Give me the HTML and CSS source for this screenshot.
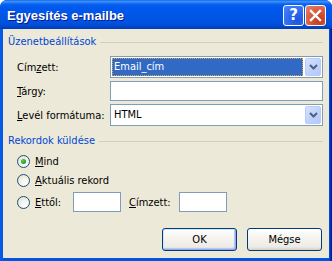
FILE: index.html
```html
<!DOCTYPE html>
<html lang="hu">
<head>
<meta charset="utf-8">
<title>Egyesítés e-mailbe</title>
<link rel="stylesheet" href="styles.css">
</head>
<body>
<div class="window">
  <div class="titlebar">
    <span class="title">Egyesítés e-mailbe</span>
    <div class="tbtns">
      <span class="tb help">?</span>
      <span class="tb close"><svg width="13" height="13" viewBox="0 0 13 13"><path d="M2 2 L11 11 M11 2 L2 11" stroke="#fff" stroke-width="2.4" stroke-linecap="square"/></svg></span>
    </div>
  </div>
  <div class="client">
    <div class="legend"><span>Üzenetbeállítások</span><i class="rule"></i></div>
    <div class="frow combo-row first">
      <span class="lbl">Cím<u>z</u>ett:</span>
      <div class="combo"><span class="sel">Email_cím</span><span class="drop"><svg width="9" height="6" viewBox="0 0 9 6"><path d="M1 1 L4.5 4.5 L8 1" stroke="#4D6185" stroke-width="2" fill="none"/></svg></span></div>
    </div>
    <div class="frow text-row">
      <span class="lbl"><u>T</u>árgy:</span>
      <div class="tbox"></div>
    </div>
    <div class="frow combo-row">
      <span class="lbl"><u>L</u>evél formátuma:</span>
      <div class="combo"><span class="val">HTML</span><span class="drop"><svg width="9" height="6" viewBox="0 0 9 6"><path d="M1 1 L4.5 4.5 L8 1" stroke="#4D6185" stroke-width="2" fill="none"/></svg></span></div>
    </div>
    <div class="legend g2"><span>Rekordok küldése</span><i class="rule"></i></div>
    <div class="radio r-mind"><span class="dot on"></span><span><u>M</u>ind</span></div>
    <div class="radio r-akt"><span class="dot"></span><span><u>A</u>ktuális rekord</span></div>
    <div class="radio r-ett">
      <span class="dot"></span><span class="ettl"><u>E</u>ttől:</span>
      <div class="tbox small"></div>
      <span class="cimz"><u>C</u>ímzett:</span>
      <div class="tbox small"></div>
    </div>
    <div class="buttons">
      <span class="btn def">OK</span>
      <span class="btn">Mégse</span>
    </div>
  </div>
</div>
</body>
</html>
```

FILE: styles.css
```css
* { box-sizing: border-box; }
html, body { margin: 0; padding: 0; }
body {
  width: 332px; height: 261px; overflow: hidden;
  font-family: "DejaVu Sans Condensed", "DejaVu Sans", sans-serif;
  font-size: 11px; color: #000;
}
.window {
  width: 332px; height: 261px;
  display: flex; flex-direction: column;
  background: linear-gradient(to right, #0055EA 0, #0A5FE8 1px, #0055E5 3px, #0055E5 329px, #0040C8 330px, #00138C 332px);
  border-radius: 7px 7px 0 0;
}
.titlebar {
  height: 29px; flex: none;
  display: flex; align-items: center;
  padding: 0 6px 0 7px;
  border-radius: 7px 7px 0 0;
  background: linear-gradient(to bottom, #0058EE 0, #3B93FF 1px, #3B8CF8 2px, #0A63EE 4px, #0058EE 7px, #0055E5 18px, #0050DC 24px, #0046C8 27px, #003DB8 29px);
}
.title {
  flex: 1;
  color: #fff; font-weight: bold; font-size: 13px;
  font-family: "Liberation Sans", Arial, sans-serif;
  text-shadow: 1px 1px 0 #0A1883;
  padding-top: 1px;
}
.tbtns { display: flex; gap: 1px; margin-top: 1px; }
.tb {
  width: 21px; height: 21px;
  border: 1px solid #fff; border-radius: 3px;
  display: flex; align-items: center; justify-content: center;
}
.help {
  background: radial-gradient(circle at 70% 75%, #1F55E0 0, #2A66F0 40%, #4C86FB 100%);
  color: #fff; font-weight: bold; font-size: 15px;
  font-family: "DejaVu Sans", sans-serif;
}
.close {
  background: radial-gradient(circle at 70% 75%, #C3391E 0, #D65236 40%, #E8846A 100%);
}
.client {
  flex: 1;
  margin: 0 3px 3px 3px;
  background: #ECE9D8;
  padding: 6px 6px 0 5px;
  display: flex; flex-direction: column;
}
.legend {
  height: 13px; line-height: 13px;
  display: flex; align-items: center;
  color: #0046D5;
}
.rule { flex: 1; height: 1px; background: #D0D0BF; margin-left: 4px; margin-top: 1px; }
.g2 { margin-top: 8px; }
.frow { display: flex; align-items: center; margin-left: 9px; }
.lbl { width: 93px; flex: none; }
.first { margin-top: 8px; }
.combo-row { height: 22px; }
.text-row { height: 20px; margin-top: 3px; }
.combo-row:not(.first) { margin-top: 3px; }
.combo {
  flex: 1; height: 22px;
  border: 1px solid #7F9DB9; background: #fff;
  display: flex; align-items: stretch;
}
.sel {
  flex: 1; margin: 1px 1px 1px 1px;
  background: #316AC5; color: #fff;
  outline: 1px dotted #E0A040; outline-offset: -1px;
  padding-left: 2px; line-height: 18px;
}
.val { flex: 1; padding-left: 3px; line-height: 20px; }
.drop {
  width: 16px; flex: none; margin: 1px;
  border: 1px solid #B9CCF5; border-radius: 2px;
  background: linear-gradient(135deg, #D7E2FD 0, #C1D3FB 50%, #B4C8F6 100%);
  display: flex; align-items: center; justify-content: center;
}
.tbox {
  flex: 1; height: 20px;
  border: 1px solid #7F9DB9; background: #fff;
}
.radio { display: flex; align-items: center; margin-left: 9px; height: 13px; }
.r-mind { margin-top: 8px; }
.r-akt { margin-top: 6px; }
.r-ett { margin-top: 5px; height: 20px; }
.dot {
  width: 13px; height: 13px; flex: none;
  border-radius: 50%;
  border: 1px solid #1C5180;
  background: radial-gradient(circle at 65% 70%, #FFFFFF 0, #F5F4EA 40%, #DCD9C8 100%);
  margin-right: 5px;
  display: flex; align-items: center; justify-content: center;
}
.dot.on::after {
  content: ""; width: 5px; height: 5px; border-radius: 50%;
  background: radial-gradient(circle at 40% 40%, #55D551 0, #21A121 60%, #168716 100%);
}
.ettl { width: 38px; }
.tbox.small { flex: none; width: 48px; }
.cimz { width: 50px; margin-left: 8px; }
.buttons {
  margin-top: 16px;
  display: flex; justify-content: flex-end; gap: 10px;
  margin-right: 1px;
}
.btn {
  width: 75px; height: 23px;
  border: 1px solid #003C74; border-radius: 3px;
  background: linear-gradient(to bottom, #FFFFFF 0, #F5F4F0 40%, #ECEBE6 85%, #D6D0C5 100%);
  display: flex; align-items: center; justify-content: center;
}
.btn.def {
  box-shadow: inset -1px -1px 0 #98A8EE, inset 1px 1px 0 #CEE7FF, inset -2px -2px 0 #B4C8F6;
}
u { text-decoration: underline; text-underline-offset: 1px; }
```
